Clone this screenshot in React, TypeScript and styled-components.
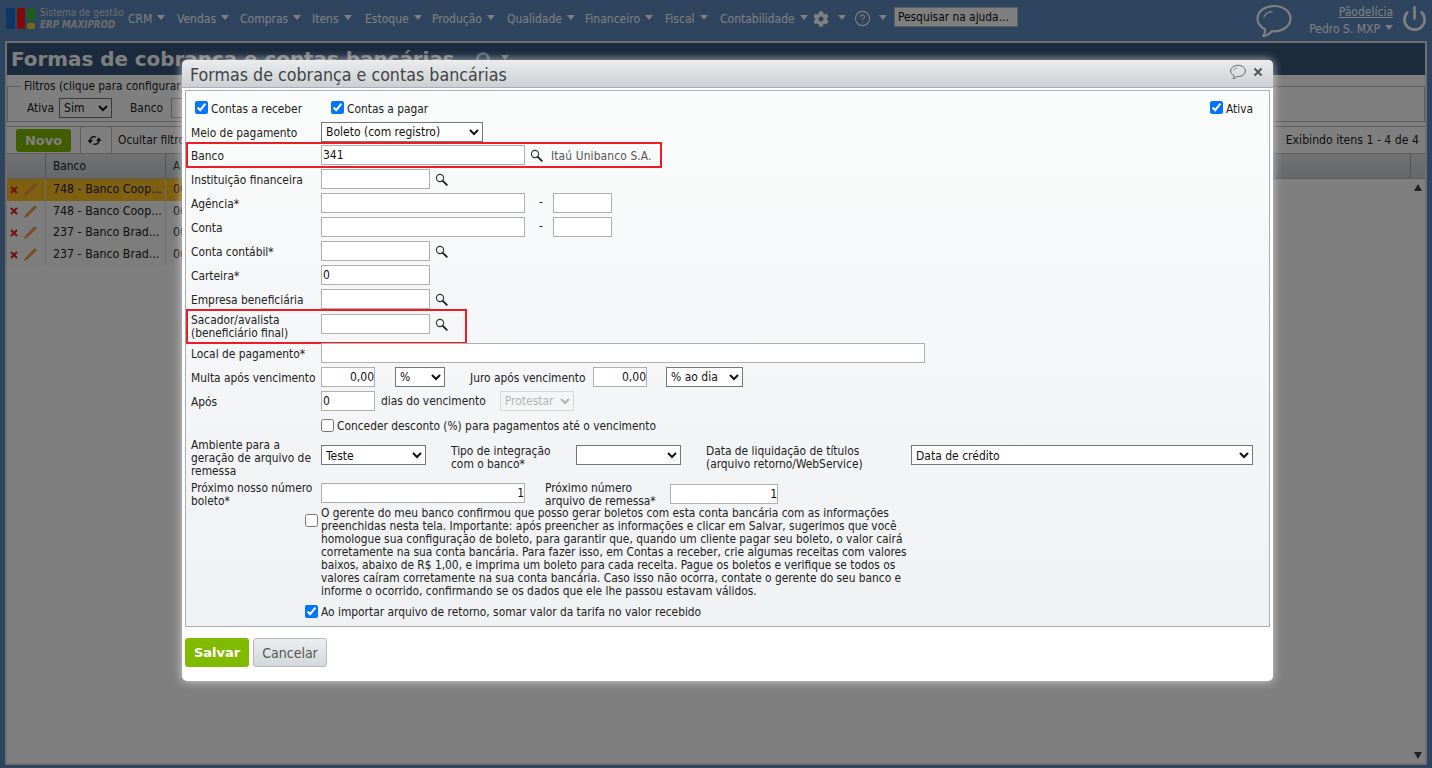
import React from "react";
import styled, { createGlobalStyle } from "styled-components";
import { FaCog } from "react-icons/fa";
import { Power, CircleHelp } from "lucide-react";

const Global = createGlobalStyle`
  html, body { margin: 0; padding: 0; height: 100%; overflow: hidden; }
  body { font-family: "DejaVu Sans Condensed", "DejaVu Sans", sans-serif; font-size: 11.85px; color: #222; }
  * { box-sizing: border-box; }
`;

const Page = styled.div`
  position: relative; width: 1432px; height: 768px; background: #5e8abe;
  display: flex; flex-direction: column; overflow: hidden;
`;
const TopBar = styled.header`
  height: 41px; display: flex; align-items: center; flex: none; color: #fff;
`;
const Logo = styled.div`
  margin-left: 6px; width: 29px; height: 21px; display: grid; grid-template-columns: 9px 8px 8px; grid-template-rows: 13px 6px; gap: 2px; margin-top: -4px; flex: none;
`;
const LogoBar = styled.i<{ $c: string; $tall?: boolean }>`
  background: ${p => p.$c}; border-radius: 2px; ${p => p.$tall ? "grid-row: 1 / 3;" : ""}
`;
const Brand = styled.div`
  margin-left: 5px; width: 88px; flex: none; margin-top: -4px; line-height: 12px; font-size: 10px; color: #d4dae0; white-space: nowrap;
  b { display: block; font-size: 9.7px; font-style: italic; }
`;
const NavItem = styled.span<{ $w: number }>`
  width: ${p => p.$w}px; flex: none; font-size: 12px; display: flex; align-items: center; gap: 5px; margin-top: -4px;
`;
const Caret = styled.i`
  width: 0; height: 0; border: 4px solid transparent; border-top: 5px solid #fff; border-bottom: 0; margin-top: -3px; display: inline-block; flex: none;
`;
const HelpSearch = styled.input`
  width: 124px; height: 20px; margin-top: -4px; border: 1px solid #bbb; background: #fff; font: inherit; padding: 1px 3px; color: #111;
  &::placeholder { color: #111; opacity: 1; }
`;
const UserBox = styled.div`
  margin-left: auto; display: flex; align-items: center; margin-right: 4px; flex: none;
`;
const UserText = styled.div`
  width: 90px; margin-left: 11px; text-align: right; line-height: 17px; font-size: 12px;
  u { display: block; }
  span { display: flex; justify-content: flex-end; align-items: center; gap: 5px; }
`;
const IconGap = styled.span<{ $l?: number }>`
  margin-left: ${p => p.$l ?? 0}px; display: inline-flex; margin-top: -4px; flex: none;
`;
const PowerGap = styled.span`
  margin-left: 8px; display: inline-flex; margin-top: -5px;
`;

const Frame = styled.main`
  flex: 1; margin: 0 5px 3px; border: 2px solid #ddd; background: #fff; display: flex; flex-direction: column; min-height: 0;
`;
const PageTitle = styled.div`
  height: 32px; background: #36567a; color: #fff; font: bold 19.9px "DejaVu Sans", sans-serif; padding-left: 4px; line-height: 31px; flex: none;
  display: flex; align-items: center; white-space: nowrap;
`;
const TitleDot = styled.i`
  width: 14px; height: 14px; border-radius: 50%; border: 3px solid #9ec4f0; margin-left: 21px; flex: none;
`;
const TitleCaret = styled(Caret)`
  margin-left: 11px; margin-top: -4px; border-top-color: #ddd;
`;
const Filters = styled.fieldset`
  margin: 6px 0 0 0; padding: 7px 0 0 19px; height: 41px; border: 1px solid #bbb; display: flex; align-items: center; gap: 5px; flex: none;
  legend { padding: 0 3px; margin-left: -6px; line-height: 10px; }
`;
const ToolBar = styled.div`
  height: 28px; margin-top: 4px; flex: none; display: flex; align-items: center; padding-left: 9px; border-top: 1px solid #bbb; border-bottom: 1px solid #bbb;
`;
const NewBtn = styled.button`
  width: 55px; height: 23px; background: #80bb00; border: 0; border-radius: 3px; color: #fff; font: bold 13px "DejaVu Sans", sans-serif;
`;
const GridHead = styled.div`
  height: 25px; background: linear-gradient(#e2e4e8, #ccd0d4); display: flex; align-items: center; border-bottom: 1px solid #bbb; flex: none;
`;
const HeadCell = styled.div<{ $w: number }>`
  width: ${p => p.$w}px; height: 100%; border-right: 1px solid #aaa; display: flex; align-items: center; padding-left: 7px; flex: none;
`;
const GridRow = styled.div<{ $bg: string }>`
  height: 21.6px; background: ${p => p.$bg}; display: flex; align-items: center; flex: none; width: 600px;
`;
const RowIcons = styled.div`
  width: 39px; height: 100%; display: flex; align-items: center; padding-left: 3px; gap: 5px; flex: none; border-right: 1px solid #ddd;
`;
const Cell = styled.div<{ $w: number }>`
  width: ${p => p.$w}px; height: 100%; line-height: 21px; font-size: 12.3px; padding-left: 7px; flex: none; white-space: nowrap; overflow: hidden; border-right: 1px solid #ddd;
`;
const GridBody = styled.div`
  position: relative; flex: 1;
`;
const ScrollArrow = styled.i<{ $up?: boolean }>`
  position: absolute; right: 3px; ${p => p.$up ? "top: 5px;" : "bottom: 4px;"} width: 0; height: 0;
  border: 4.5px solid transparent; border-${p => p.$up ? "bottom" : "top"}: 7px solid #444; border-${p => p.$up ? "top" : "bottom"}: 0;
`;
const ToolDivider = styled.i`
  width: 1px; height: 26px; background: #bbb; margin: 0 6px 0 9px;
`;
const ShowingText = styled.span`
  margin-left: auto; margin-right: 6px; font-size: 12.2px;
`;

const Overlay = styled.div`
  position: absolute; inset: 0; background: rgba(0, 0, 0, .5);
`;
const Modal = styled.section`
  position: absolute; left: 182px; top: 60px; width: 1091px; height: 621px; background: #fff; border-radius: 5px;
  box-shadow: 0 0 10px rgba(255,255,255,.7); display: flex; flex-direction: column; padding: 0 3px;
`;
const ModalHead = styled.div`
  height: 28px; margin: 0 -3px; padding: 3px 10px 0 8px; background: linear-gradient(#eaecee, #ccd0d4); border-radius: 5px 5px 0 0;
  border-bottom: 1px solid #a9adb8; display: flex; align-items: center; flex: none; font-size: 17.7px; color: #444;
`;
const HeadTools = styled.div`
  margin-left: auto; display: flex; align-items: center; gap: 7px; margin-top: -6px;
`;
const Panel = styled.div`
  margin-top: 2px; height: 537px; border: 1px solid #a9adb8; background: linear-gradient(#fafbfb, #eff1f3); padding: 10px 0 0 5px; flex: none;
`;
const Row = styled.div<{ $h?: number }>`
  position: relative; display: flex; align-items: flex-start; height: ${p => p.$h ?? 24}px;
`;
const Label = styled.label<{ $w?: number; $top?: number; $l?: number }>`
  width: ${p => p.$w ?? 130}px; flex: none; line-height: 13px; margin: ${p => p.$top ?? 5}px 0 0 ${p => p.$l ?? 0}px; color: #222; white-space: nowrap;
`;
const TextInput = styled.input<{ $w: number; $right?: boolean; $top?: number }>`
  width: ${p => p.$w}px; height: 20px; flex: none; border: 1px solid #b0b0b0; background: #fff; font: inherit; font-size: 12px; color: #111;
  padding: 1px 0 1px 1px; margin: ${p => p.$top ?? 0}px 0 0 0; text-align: ${p => p.$right ? "right" : "left"}; border-radius: 0;
`;
const Select = styled.select<{ $w: number; $l?: number; $top?: number; $pt?: number }>`
  width: ${p => p.$w}px; height: 20px; flex: none; font: inherit; font-size: 12px; margin: ${p => p.$top ?? 0}px 0 0 ${p => p.$l ?? 0}px; background: #fff; color: #111; padding: ${p => p.$pt ?? 0}px 0 0;
  &:disabled { color: #999; border-color: #ccc; background: #f5f5f5; }
`;
const Check = styled.input.attrs({ type: "checkbox" })<{ $top?: number }>`
  width: 13px; height: 13px; margin: ${p => p.$top ?? 0}px 0 0 0; flex: none;
`;
const CheckLabel = styled.span<{ $w?: number; $dy?: number }>`
  margin: ${p => p.$dy ?? 2}px 0 0 3px; ${p => p.$w ? `width: ${p.$w}px;` : ""} line-height: 13px; flex: none;
`;
const CheckRow = styled.div<{ $h: number; $pad?: number; $mb?: number }>`
  display: flex; align-items: center; height: ${p => p.$h}px; padding-left: ${p => p.$pad ?? 0}px; margin-bottom: ${p => p.$mb ?? 0}px;
`;
const Lookup = styled.button`
  width: 22px; height: 20px; border: 0; padding: 0; background: none; display: flex; align-items: center; justify-content: center; flex: none;
`;
const Dash = styled.span`
  width: 28px; text-align: center; padding: 2px 0 0 4px; flex: none;
`;
const LookupText = styled.span`
  margin-left: 4px; padding-top: 5px; line-height: 13px; color: #555; flex: none; letter-spacing: .15px;
`;
const Inline = styled.span<{ $l: number }>`
  margin-left: ${p => p.$l}px; padding-top: 4px; line-height: 13px; flex: none;
`;
const FilterBanco = styled.span`
  margin: 0 3px 0 13px; flex: none;
`;
const Highlight = styled.div<{ $w: number; $h: number; $top: number }>`
  position: absolute; left: -5px; top: ${p => p.$top}px; width: ${p => p.$w}px; height: ${p => p.$h}px; border: 2px solid #ee1c25; pointer-events: none;
`;
const Terms = styled.div`
  display: flex; align-items: flex-start; padding-left: 114px;
`;
const TermsText = styled.p`
  margin: 0 0 0 3px; width: 600px; line-height: 13px; color: #222;
`;
const Footer = styled.div`
  display: flex; gap: 4px; margin-top: 11px;
`;
const SaveBtn = styled.button`
  width: 64px; height: 29px; background: #80bb00; border: 0; border-radius: 3px; color: #fff; font: bold 13px "DejaVu Sans", sans-serif;
`;
const CancelBtn = styled.button`
  width: 74px; height: 29px; background: linear-gradient(#eceef0, #d4d7db); border: 1px solid #b4b8c0; border-radius: 3px; color: #555; font: 14px "DejaVu Sans Condensed", "DejaVu Sans", sans-serif;
`;

const Search = () => (
  <svg width="13" height="13" viewBox="0 0 13 13" fill="none">
    <circle cx="5" cy="5" r="3.6" stroke="#333" strokeWidth="1.1" fill="#f4f8fb" />
    <path d="M7.8 7.8 L11.8 11.8" stroke="#222" strokeWidth="1.9" strokeLinecap="round" />
  </svg>
);
const Bubble = ({ s, c, w }: { s: number; c: string; w: number }) => (
  <svg width={s} height={s} viewBox="0 0 36 34" fill="none">
    <path d="M18 2C8.6 2 1.5 7.6 1.5 14.6c0 4.6 3.1 8.6 7.7 10.8 0 2.6-.8 5-2 6.6 3.4-.4 6.6-2.4 8.6-4.8.7.1 1.4.1 2.2.1 9.4 0 16.5-5.6 16.5-12.7S27.4 2 18 2Z" stroke={c} strokeWidth={w} strokeLinejoin="round" />
    <path d="M8 13c1-3 4-5 8-5.5" stroke={c} strokeWidth={w * 0.6} strokeLinecap="round" />
  </svg>
);
const Pencil = () => (
  <svg width="15" height="15" viewBox="0 0 15 15">
    <path d="M11.8 1.5 L13.5 3.2 L4.6 12 L1.5 13.5 L3 10.4 Z" fill="#f0a04a" stroke="#c87a20" strokeWidth=".5" />
  </svg>
);
const RedX = () => (
  <svg width="8" height="8" viewBox="0 0 8 8"><path d="M1 1 L7 7 M7 1 L1 7" stroke="#e0202a" strokeWidth="2" /></svg>
);
const CloseX = () => (
  <svg width="10" height="10" viewBox="0 0 10 10"><path d="M1.5 1.5 L8.5 8.5 M8.5 1.5 L1.5 8.5" stroke="#555" strokeWidth="2" /></svg>
);
const Refresh = () => (
  <svg width="15" height="13" viewBox="0 0 14 12" fill="none" stroke="#222" strokeWidth="1.5">
    <path d="M8 2.6 C5 2 3 3.4 3 6" />
    <path d="M.4 5.6 H5.6 L3 9 Z" fill="#222" stroke="none" />
    <path d="M6 9.4 C9 10 11 8.6 11 6" />
    <path d="M8.4 6.4 H13.6 L11 3 Z" fill="#222" stroke="none" />
  </svg>
);

const nav: [string, number][] = [["CRM", 49], ["Vendas", 63], ["Compras", 72], ["Itens", 53], ["Estoque", 67], ["Produção", 75], ["Qualidade", 78], ["Financeiro", 80], ["Fiscal", 55], ["Contabilidade", 93]];
const rows: [string, string][] = [["748 - Banco Coop...", "#ffbf20"], ["748 - Banco Coop...", "#fafafa"], ["237 - Banco Brad...", "#fafafa"], ["237 - Banco Brad...", "#fafafa"]];
const terms = "O gerente do meu banco confirmou que posso gerar boletos com esta conta bancária com as informações preenchidas nesta tela. Importante: após preencher as informações e clicar em Salvar, sugerimos que você homologue sua configuração de boleto, para garantir que, quando um cliente pagar seu boleto, o valor cairá corretamente na sua conta bancária. Para fazer isso, em Contas a receber, crie algumas receitas com valores baixos, abaixo de R$ 1,00, e imprima um boleto para cada receita. Pague os boletos e verifique se todos os valores caíram corretamente na sua conta bancária. Caso isso não ocorra, contate o gerente do seu banco e informe o ocorrido, confirmando se os dados que ele lhe passou estavam válidos.";

export default function App() {
  return (
    <Page>
      <Global />
      <TopBar>
        <Logo>
          <LogoBar $c="#146ec8" $tall />
          <LogoBar $c="#32be32" />
          <LogoBar $c="#ff1414" $tall />
          <LogoBar $c="#f8d028" />
        </Logo>
        <Brand>Sistema de gestão<b>ERP MAXIPROD</b></Brand>
        {nav.map(([n, w]) => <NavItem key={n} $w={w}>{n}<Caret /></NavItem>)}
        <IconGap><FaCog size={16} color="#fff" /></IconGap>
        <IconGap $l={9}><Caret /></IconGap>
        <IconGap $l={8}><CircleHelp size={17} color="#fff" strokeWidth={1.6} /></IconGap>
        <IconGap $l={8}><Caret /></IconGap>
        <IconGap $l={7}><HelpSearch placeholder="Pesquisar na ajuda..." readOnly /></IconGap>
        <UserBox>
          <Bubble s={36} c="#fff" w={2.2} />
          <UserText><u>Pãodelícia</u><span>Pedro S. MXP <Caret /></span></UserText>
          <PowerGap><Power size={27} color="#fff" strokeWidth={2.4} /></PowerGap>
        </UserBox>
      </TopBar>
      <Frame>
        <PageTitle>Formas de cobrança e contas bancárias<TitleDot /><TitleCaret /></PageTitle>
        <Filters>
          <legend>Filtros (clique para configurar)</legend>
          <span>Ativa</span>
          <Select $w={53} defaultValue="Sim"><option>Sim</option></Select>
          <FilterBanco>Banco</FilterBanco>
          <TextInput $w={100} />
        </Filters>
        <ToolBar>
          <NewBtn>Novo</NewBtn>
          <ToolDivider />
          <Refresh />
          <ToolDivider />
          <span>Ocultar filtros</span>
          <ShowingText>Exibindo itens 1 - 4 de 4</ShowingText>
        </ToolBar>
        <GridHead>
          <HeadCell $w={39} />
          <HeadCell $w={120}>Banco</HeadCell>
          <HeadCell $w={1245}>A</HeadCell>
        </GridHead>
        <GridBody>
          {rows.map(([t, c], i) => (
            <GridRow key={i} $bg={c}>
              <RowIcons><RedX /><Pencil /></RowIcons>
              <Cell $w={120}>{t}</Cell>
              <Cell $w={40}>00</Cell>
            </GridRow>
          ))}
          <ScrollArrow $up />
          <ScrollArrow />
        </GridBody>
      </Frame>
      <Overlay />
      <Modal>
        <ModalHead>
          Formas de cobrança e contas bancárias
          <HeadTools><Bubble s={16} c="#555" w={2} /><CloseX /></HeadTools>
        </ModalHead>
        <Panel>
          <CheckRow $h={13} $pad={4} $mb={8}>
            <Check defaultChecked readOnly />
            <CheckLabel $w={120} $dy={4}>Contas a receber</CheckLabel>
            <Check defaultChecked readOnly />
            <CheckLabel $w={863} $dy={4}>Contas a pagar</CheckLabel>
            <Check defaultChecked readOnly />
            <CheckLabel $dy={4}>Ativa</CheckLabel>
          </CheckRow>
          <Row $h={23}>
            <Label>Meio de pagamento</Label>
            <Select $w={162} defaultValue="b"><option value="b">Boleto (com registro)</option></Select>
          </Row>
          <Row>
            <Highlight $w={476} $h={26} $top={-3} />
            <Label>Banco</Label>
            <TextInput $w={204} defaultValue="341" />
            <Lookup><Search /></Lookup>
            <LookupText>Itaú Unibanco S.A.</LookupText>
          </Row>
          <Row><Label>Instituição financeira</Label><TextInput $w={109} /><Lookup><Search /></Lookup></Row>
          <Row><Label>Agência*</Label><TextInput $w={204} /><Dash>-</Dash><TextInput $w={59} /></Row>
          <Row><Label>Conta</Label><TextInput $w={204} /><Dash>-</Dash><TextInput $w={59} /></Row>
          <Row><Label>Conta contábil*</Label><TextInput $w={109} /><Lookup><Search /></Lookup></Row>
          <Row><Label>Carteira*</Label><TextInput $w={109} defaultValue="0" /></Row>
          <Row $h={25}><Label>Empresa beneficiária</Label><TextInput $w={109} /><Lookup><Search /></Lookup></Row>
          <Row $h={29}>
            <Highlight $w={281} $h={35} $top={-5} />
            <Label $top={0}>Sacador/avalista<br />(beneficiário final)</Label>
            <TextInput $w={109} /><Lookup><Search /></Lookup>
          </Row>
          <Row><Label>Local de pagamento*</Label><TextInput $w={604} /></Row>
          <Row>
            <Label>Multa após vencimento</Label>
            <TextInput $w={54} $right defaultValue="0,00" />
            <Select $w={50} $l={20} defaultValue="p"><option value="p">%</option></Select>
            <Label $w={123} $l={25}>Juro após vencimento</Label>
            <TextInput $w={54} $right defaultValue="0,00" />
            <Select $w={77} $l={19} defaultValue="d"><option value="d">% ao dia</option></Select>
          </Row>
          <Row>
            <Label>Após</Label>
            <TextInput $w={54} defaultValue="0" />
            <Inline $l={6}>dias do vencimento</Inline>
            <Select $w={74} $l={14} disabled defaultValue="x"><option value="x">Protestar</option></Select>
          </Row>
          <CheckRow $h={21} $pad={130} $mb={2}>
            <Check />
            <CheckLabel>Conceder desconto (%) para pagamentos até o vencimento</CheckLabel>
          </CheckRow>
          <Row $h={45}>
            <Label $top={1}>Ambiente para a<br />geração de arquivo de<br />remessa</Label>
            <Select $w={105} $top={7} $pt={2} defaultValue="t"><option value="t">Teste</option></Select>
            <Label $w={125} $l={25} $top={7}>Tipo de integração<br />com o banco*</Label>
            <Select $w={105} $top={7} defaultValue=""><option value="" /></Select>
            <Label $w={205} $l={25} $top={7}>Data de liquidação de títulos<br />(arquivo retorno/WebService)</Label>
            <Select $w={342} $top={7} $pt={2} defaultValue="c"><option value="c">Data de crédito</option></Select>
          </Row>
          <Row>
            <Label $top={-1}>Próximo nosso número<br />boleto*</Label>
            <TextInput $w={204} $right defaultValue="1" />
            <Label $w={125} $l={20} $top={-1}>Próximo número<br />arquivo de remessa*</Label>
            <TextInput $w={108} $right $top={1} defaultValue="1" />
          </Row>
          <Terms>
            <Check $top={7} />
            <TermsText>{terms}</TermsText>
          </Terms>
          <CheckRow $h={26} $pad={114}>
            <Check defaultChecked readOnly />
            <CheckLabel>Ao importar arquivo de retorno, somar valor da tarifa no valor recebido</CheckLabel>
          </CheckRow>
        </Panel>
        <Footer>
          <SaveBtn>Salvar</SaveBtn>
          <CancelBtn>Cancelar</CancelBtn>
        </Footer>
      </Modal>
    </Page>
  );
}
